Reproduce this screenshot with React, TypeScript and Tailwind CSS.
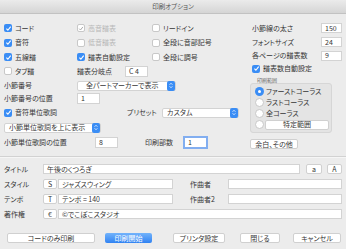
import React from 'react';

type CheckProps = { label: string; checked?: boolean; disabled?: boolean };

const Check = ({ label, checked = false, disabled = false }: CheckProps) => (
  <div className={`flex items-center gap-[3px] ${disabled ? 'text-[#b8b8b8]' : ''}`}>
    <span
      className={`flex h-[8px] w-[8px] shrink-0 items-center justify-center rounded-[2px] ${
        checked && !disabled ? 'bg-[#3a8df5]' : 'border border-[#c8c8c8] bg-white'
      }`}
    >
      {checked && (
        <svg viewBox="0 0 8 8" className="h-[7px] w-[7px]">
          <path d="M1.6 4.2 3.3 6 6.5 1.9" fill="none" stroke={disabled ? '#a8a8a8' : '#fff'} strokeWidth="1.3" />
        </svg>
      )}
    </span>
    <span className="whitespace-nowrap">{label}</span>
  </div>
);

const Field = ({ value = '', className = '' }: { value?: string; className?: string }) => (
  <div className={`flex h-[10px] items-center whitespace-nowrap border border-[#d3d3d3] bg-white px-[3px] ${className}`}>{value}</div>
);

const Stepper = () => (
  <span className="flex h-[10px] w-[8px] shrink-0 flex-col items-center justify-center gap-[1px] rounded-[2px] bg-[#3a8df5]">
    <svg viewBox="0 0 6 3" className="h-[2px] w-[4px]">
      <path d="M0.5 2.7 3 0.5 5.5 2.7" fill="none" stroke="#fff" strokeWidth="1" />
    </svg>
    <svg viewBox="0 0 6 3" className="h-[2px] w-[4px]">
      <path d="M0.5 0.3 3 2.5 5.5 0.3" fill="none" stroke="#fff" strokeWidth="1" />
    </svg>
  </span>
);

const Select = ({ text, className = '' }: { text: string; className?: string }) => (
  <div className={`flex h-[10px] items-center justify-between rounded-[2px] border border-[#d3d3d3] bg-white ${className}`}>
    <span className="whitespace-nowrap">{text}</span>
    <Stepper />
  </div>
);

const Btn = ({ label, className = '', primary = false }: { label: string; className?: string; primary?: boolean }) => (
  <div
    className={`flex h-[10px] items-center justify-center whitespace-nowrap rounded-[2px] ${
      primary ? 'bg-linear-to-b from-[#72b3fb] to-[#2f82f2] text-white' : 'border border-[#d0d0d0] bg-white'
    } ${className}`}
  >
    {label}
  </div>
);

const Radio = ({ on = false }: { on?: boolean }) => (
  <span
    className={`flex h-[9px] w-[9px] shrink-0 items-center justify-center rounded-full ${
      on ? 'bg-[#3a8df5]' : 'border border-[#c8c8c8] bg-white'
    }`}
  >
    {on && <span className="h-[3px] w-[3px] rounded-full bg-white" />}
  </span>
);

export default function App() {
  return (
    <div className="h-[249px] w-[346px] overflow-hidden bg-[#ececec] font-['Noto_Sans_CJK_JP','Noto_Sans',sans-serif] text-[7px] leading-none text-[#363636] [font-feature-settings:'palt']">
      {/* title bar */}
      <div className="flex h-[14px] items-center justify-center border-b border-[#c2c2c2] bg-linear-to-b from-[#ebebeb] to-[#d5d5d5] text-[6.5px] text-[#555]">
        印刷オプション
      </div>

      {/* upper settings */}
      <div className="flex pl-[4px] pt-[7px]">
        <div className="w-[248px]">
          <div className="flex h-[14px] items-center">
            <div className="w-[73px]"><Check label="コード" checked /></div>
            <div className="w-[75px]"><Check label="高音譜表" checked disabled /></div>
            <Check label="リードイン" />
          </div>
          <div className="flex h-[15px] items-center">
            <div className="w-[73px]"><Check label="音符" checked /></div>
            <div className="w-[75px]"><Check label="低音譜表" disabled /></div>
            <Check label="全段に音部記号" />
          </div>
          <div className="flex h-[14px] items-center">
            <div className="w-[73px]"><Check label="五線譜" checked /></div>
            <div className="w-[75px]"><Check label="譜表自動設定" checked /></div>
            <Check label="全段に調号" />
          </div>
          <div className="flex h-[14px] items-center">
            <div className="w-[73px]"><Check label="タブ譜" /></div>
            <span className="w-[48px]">譜表分岐点</span>
            <Field value="C 4" className="h-[11px] w-[23px]" />
          </div>
          <div className="flex h-[15px] items-center">
            <span className="w-[73px]">小節番号</span>
            <Select text="全パートマーカーで表示" className="w-[99px] pl-[8px]" />
          </div>
          <div className="flex h-[11px] items-center">
            <span className="w-[73px]">小節番号の位置</span>
            <Field value="1" className="h-[11px] w-[23px]" />
          </div>
          <div className="flex h-[17px] items-center">
            <div className="w-[123px]"><Check label="音符単位歌詞" checked /></div>
            <span className="w-[35px]">プリセット</span>
            <Select text="カスタム" className="w-[77px] pl-[4px]" />
          </div>
          <div className="flex h-[13px] items-center">
            <Select text="小節単位歌詞を上に表示" className="w-[97px] pl-[4px]" />
          </div>
          <div className="flex h-[17px] items-center">
            <span className="w-[91px]">小節単位歌詞の位置</span>
            <Field value="8" className="h-[11px] w-[23px]" />
            <span className="ml-[27px] w-[38px]">印刷部数</span>
            <div className="flex h-[13px] w-[25px] items-center border-2 border-[#82aef0] bg-white px-[3px]">1</div>
          </div>
        </div>

        <div className="w-[90px]">
          <div className="flex h-[14px] items-center justify-between">
            <span>小節線の太さ</span>
            <Field value="150" className="w-[21px]" />
          </div>
          <div className="flex h-[14px] items-center justify-between">
            <span>フォントサイズ</span>
            <Field value="24" className="w-[21px]" />
          </div>
          <div className="flex h-[13px] items-center justify-between">
            <span>各ページの譜表数</span>
            <Field value="9" className="w-[21px]" />
          </div>
          <div className="flex h-[13px] items-center">
            <Check label="譜表数自動設定" checked />
          </div>
          <div className="flex h-[8px] items-center pl-[5px] text-[5px] text-[#666]">印刷範囲</div>
          <div className="-ml-[2px] h-[50px] w-[82px] rounded-[3px] border border-[#d6d6d6] bg-[#e4e4e4] pl-[4px] pt-[2px]">
            <div className="flex h-[11px] items-center gap-[2px]"><Radio on /><span>ファーストコーラス</span></div>
            <div className="flex h-[11px] items-center gap-[2px]"><Radio /><span>ラストコーラス</span></div>
            <div className="flex h-[11px] items-center gap-[2px]"><Radio /><span>全コーラス</span></div>
            <div className="flex h-[11px] items-center gap-[1px]"><Radio /><Btn label="特定範囲" className="w-[64px]" /></div>
          </div>
          <Btn label="余白、その他" className="-ml-[2px] mt-[6px] w-[48px]" />
        </div>
      </div>

      {/* separator */}
      <div className="mt-[5px] h-px bg-[#d2d2d2]" />
      <div className="h-px bg-[#f6f6f6]" />

      {/* text fields */}
      <div className="flex flex-col gap-[5px] pl-[4px] pt-[6px]">
        <div className="flex h-[10px] items-center">
          <span className="w-[39px]">タイトル</span>
          <Field value="午後のくつろぎ" className="w-[257px]" />
          <Btn label="a" className="ml-[6px] w-[16px]" />
          <Btn label="A" className="ml-[5px] w-[15px]" />
        </div>
        <div className="flex h-[10px] items-center">
          <span className="w-[39px]">スタイル</span>
          <Btn label="S" className="w-[14px]" />
          <Field value="ジャズスウィング" className="ml-[1px] w-[115px]" />
          <span className="ml-[17px] w-[38px]">作曲者</span>
          <Field className="w-[114px]" />
        </div>
        <div className="flex h-[10px] items-center">
          <span className="w-[39px]">テンポ</span>
          <Btn label="T" className="w-[14px]" />
          <Field value="テンポ = 140" className="ml-[1px] w-[115px]" />
          <span className="ml-[17px] w-[38px]">作曲者2</span>
          <Field className="w-[114px]" />
        </div>
        <div className="flex h-[10px] items-center">
          <span className="w-[39px]">著作権</span>
          <Btn label="€" className="w-[14px]" />
          <Field value="©でこぼこスタジオ" className="ml-[1px] w-[284px]" />
        </div>
      </div>

      {/* buttons */}
      <div className="mt-[14px] flex items-center pl-[7px]">
        <Btn label="コードのみ印刷" className="w-[88px]" />
        <Btn label="印刷開始" primary className="ml-[10px] w-[47px]" />
        <Btn label="プリンタ設定" className="ml-[21px] w-[52px]" />
        <Btn label="閉じる" className="ml-[15px] w-[40px]" />
        <Btn label="キャンセル" className="ml-[13px] w-[48px]" />
      </div>
    </div>
  );
}
